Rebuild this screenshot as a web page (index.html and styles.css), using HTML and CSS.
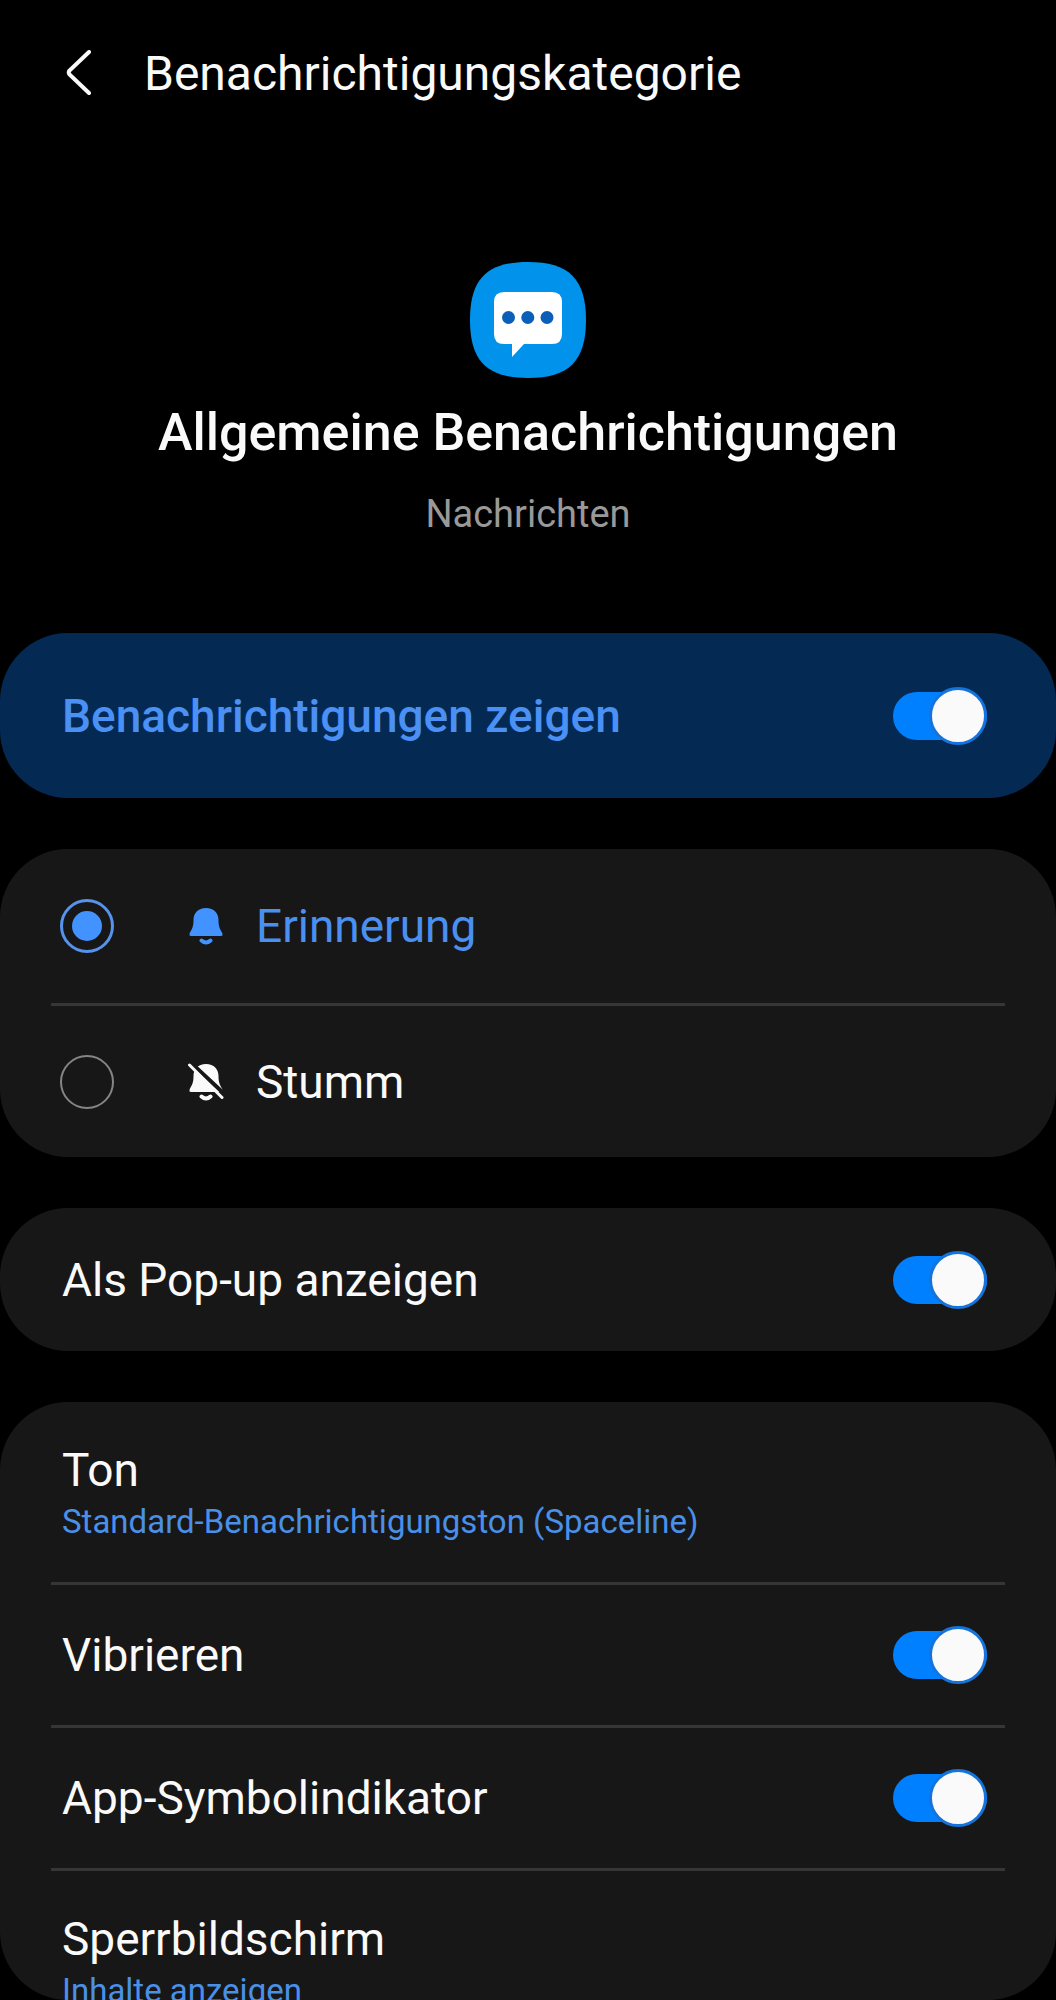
FILE: index.html
```html
<!DOCTYPE html>
<html lang="de">
<head>
  <meta charset="UTF-8" />
  <meta name="viewport" content="width=device-width, initial-scale=1.0"/>
  <title>Benachrichtigungskategorie</title>
  <link rel="stylesheet" href="styles.css">
</head>
<body>

  <header class="topbar">
    <button class="back" type="button" aria-label="Zurück">
      <svg viewBox="0 0 28 48" width="28" height="48">
        <path d="M23 2 L3.5 20.500 Q2 22.500 3.5 24.500 L23 43" />
      </svg>
    </button>
    <h1>Benachrichtigungskategorie</h1>
  </header>

  <main class="content">
    <section class="app">
      <svg class="app-icon" viewBox="0 0 116 116" width="116" height="116" aria-hidden="true">
        <path fill="#0193ec" d="M58 0 C99 0 116 17 116 58 C116 99 99 116 58 116 C17 116 0 99 0 58 C0 17 17 0 58 0 Z" />
        <path fill="#fff" d="M34 30 H82 Q92 30 92 40 V72 Q92 82 82 82 H54 L42 95 V82 H34 Q24 82 24 72 V40 Q24 30 34 30 Z" />
        <g fill="#0a5fb8">
          <circle cx="38.5" cy="55.5" r="6.5" />
          <circle cx="57.8" cy="55.5" r="6.5" />
          <circle cx="77" cy="55.5" r="6.5" />
        </g>
      </svg>
      <h2>Allgemeine Benachrichtigungen</h2>
      <p>Nachrichten</p>
    </section>

    <section class="card main-switch">
      <div class="row">
        <label for="show">Benachrichtigungen zeigen</label>
        <input class="switch" type="checkbox" id="show" checked>
      </div>
    </section>

    <section class="card">
      <div class="row option">
        <input class="radio" type="radio" name="mode" id="alert" checked>
        <svg class="bell" viewBox="0 0 38 38" width="38" height="38" aria-hidden="true">
          <path d="M19 1 C11 1 6.5 6 6.5 13 C6.5 20 5 22 3 25.5 Q1.5 29 4 29 H34 Q36.5 29 35 25.5 C33 22 31.5 20 31.5 13 C31.5 6 27 1 19 1 Z" />
          <path class="clapper" d="M14.500 33.5 Q19 37.5 23.500 33.5" />
        </svg>
        <label for="alert">Erinnerung</label>
      </div>
      <div class="row option">
        <input class="radio" type="radio" name="mode" id="mute">
        <svg class="bell" viewBox="0 0 38 38" width="38" height="38" aria-hidden="true">
          <path d="M19 1 C11 1 6.5 6 6.5 13 C6.5 20 5 22 3 25.5 Q1.5 29 4 29 H34 Q36.5 29 35 25.5 C33 22 31.5 20 31.5 13 C31.5 6 27 1 19 1 Z" />
          <path class="clapper" d="M14.500 33.5 Q19 37.5 23.500 33.5" />
          <path class="gap" d="M1 -3 L39 32.500" />
          <path class="slash" d="M2.5 2 L35 34.500" />
        </svg>
        <label for="mute">Stumm</label>
      </div>
    </section>

    <section class="card">
      <div class="row">
        <label for="popup">Als Pop-up anzeigen</label>
        <input class="switch" type="checkbox" id="popup" checked>
      </div>
    </section>

    <section class="card last">
      <button class="row detail" type="button">
        <span>Ton</span>
        <small>Standard-Benachrichtigungston (Spaceline)</small>
      </button>
      <div class="row">
        <label for="vibrate">Vibrieren</label>
        <input class="switch" type="checkbox" id="vibrate" checked>
      </div>
      <div class="row">
        <label for="badge">App-Symbolindikator</label>
        <input class="switch" type="checkbox" id="badge" checked>
      </div>
      <button class="row detail" type="button">
        <span>Sperrbildschirm</span>
        <small>Inhalte anzeigen</small>
      </button>
    </section>
  </main>

</body>
</html>
```

FILE: styles.css
```css
*,
*::before {
  box-sizing: border-box;
  margin: 0;
  padding: 0;
  font-family: Roboto, sans-serif;
}

body {
  display: flex;
  flex-direction: column;
  height: 100vh;
  overflow: hidden;
  background-color: #000;
  color: #fafafa;
}

button {
  background: none;
  border: none;
  color: inherit;
  cursor: pointer;
}

/* Header */
.topbar {
  display: flex;
  align-items: center;
  gap: 50px;
  padding: 44px 66px;
}

.back {
  display: flex;
}

.back svg {
  fill: none;
  stroke: #fafafa;
  stroke-width: 4;
  stroke-linecap: round;
}

.topbar h1 {
  font-size: 48px;
  line-height: 60px;
  font-weight: 400;
}

.content {
  display: flex;
  flex-direction: column;
  flex: 1;
  gap: 51px;
  min-height: 0;
}

/* App icon and name */
.app {
  display: flex;
  flex-direction: column;
  align-items: center;
  padding: 114px 50px 46px;
  text-align: center;
}

.app h2 {
  margin: 25px 0 29px;
  font-size: 52px;
  line-height: 60px;
  font-weight: 500;
}

.app p {
  font-size: 38px;
  line-height: 44px;
  color: #999;
}

/* Cards */
.card {
  background-color: #171717;
  border-radius: 68px;
  padding: 0 51px;
}

.row {
  display: flex;
  align-items: center;
  justify-content: space-between;
  min-height: 143px;
  padding: 0 18px 0 11px;
  font-size: 46px;
  line-height: 54px;
}

.row + .row {
  border-top: 3px solid #363636;
}

.main-switch {
  background-color: #042a54;
  color: #4a90f5;
}

.main-switch .row {
  min-height: 165px;
  font-weight: 500;
}

.option {
  justify-content: flex-start;
  min-height: 154px;
  padding-left: 9px;
}

.last {
  flex: 1;
  min-height: 0;
  overflow: hidden;
}

.detail {
  flex-direction: column;
  align-items: flex-start;
  justify-content: flex-start;
  width: 100%;
  padding-top: 41px;
  padding-bottom: 35px;
  text-align: left;
}

.detail small {
  font-size: 33px;
  line-height: 50px;
  color: #4a90e8;
}

/* Controls */
.switch {
  appearance: none;
  position: relative;
  flex-shrink: 0;
  width: 94px;
  height: 48px;
  border-radius: 24px;
  background-color: #0080ff;
  cursor: pointer;
}

.switch::before {
  content: "";
  position: absolute;
  top: -5px;
  right: 0;
  width: 58px;
  height: 58px;
  border: 3px solid #1474dc;
  border-radius: 50%;
  background-color: #fafafa;
}

.switch:not(:checked) {
  background-color: #555;
}

.switch:not(:checked)::before {
  right: auto;
  left: 0;
  border-color: #555;
}

.radio {
  appearance: none;
  display: grid;
  place-items: center;
  width: 54px;
  height: 54px;
  border: 2px solid #858585;
  border-radius: 50%;
  cursor: pointer;
}

.radio:checked {
  border: 3px solid #5792ec;
}

.radio:checked::before {
  content: "";
  width: 30px;
  height: 30px;
  border-radius: 50%;
  background-color: #4292ff;
}

.bell {
  margin: 0 31px 0 73px;
  fill: currentColor;
}

.bell .clapper,
.bell .slash,
.bell .gap {
  fill: none;
  stroke: currentColor;
  stroke-width: 4;
  stroke-linecap: round;
}

.bell .slash {
  stroke-width: 3;
}

.bell .gap {
  stroke: #171717;
}

.radio:checked ~ .bell {
  color: #4292ff;
}

.radio:checked ~ label {
  color: #4a90f0;
}
```
